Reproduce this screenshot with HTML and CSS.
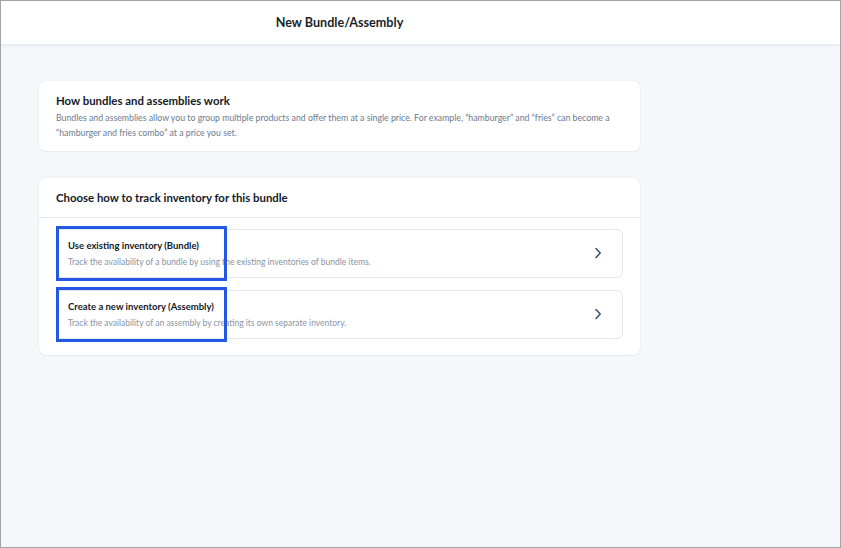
FILE: index.html
```html
<!DOCTYPE html>
<html>
<head>
<meta charset="utf-8">
<link rel="stylesheet" href="styles.css">
</head>
<body>
<div class="frame">
  <header class="topbar">
    <div class="topbar-inner">New Bundle/Assembly</div>
  </header>
  <main class="content">
    <section class="card info">
      <h2 class="card-title">How bundles and assemblies work</h2>
      <p class="card-desc">Bundles and assemblies allow you to group multiple products and offer them at a single price. For example, “hamburger” and “fries” can become a “hamburger and fries combo” at a price you set.</p>
    </section>
    <section class="card choose">
      <div class="choose-head">Choose how to track inventory for this bundle</div>
      <div class="options">
        <div class="option">
          <div class="option-text">
            <div class="option-title">Use existing inventory (Bundle)</div>
            <div class="option-desc">Track the availability of a bundle by using the existing inventories of bundle items.</div>
          </div>
          <svg class="chev" width="8" height="12" viewBox="0 0 8 12"><path d="M2 1.5 L6.2 6 L2 10.5" fill="none" stroke="#3b5478" stroke-width="1.6" stroke-linecap="round" stroke-linejoin="round"/></svg>
          <div class="highlight"></div>
        </div>
        <div class="option">
          <div class="option-text">
            <div class="option-title">Create a new inventory (Assembly)</div>
            <div class="option-desc">Track the availability of an assembly by creating its own separate inventory.</div>
          </div>
          <svg class="chev" width="8" height="12" viewBox="0 0 8 12"><path d="M2 1.5 L6.2 6 L2 10.5" fill="none" stroke="#3b5478" stroke-width="1.6" stroke-linecap="round" stroke-linejoin="round"/></svg>
          <div class="highlight"></div>
        </div>
      </div>
    </section>
  </main>
</div>
</body>
</html>
```

FILE: styles.css
```css
html, body {
  margin: 0;
  padding: 0;
}
body {
  font-family: Lato, "Noto Sans", sans-serif;
  background: #ffffff;
}
.frame {
  width: 841px;
  height: 548px;
  box-sizing: border-box;
  border: 1px solid #a2a4a7;
  background: #f4f8fb;
  overflow: hidden;
}
.topbar {
  height: 43px;
  background: #ffffff;
  box-shadow: 0 1px 3px rgba(30, 50, 80, 0.10);
  display: flex;
  align-items: center;
}
.topbar-inner {
  margin-left: 38px;
  width: 601px;
  text-align: center;
  font-weight: 700;
  font-size: 12.6px;
  color: #1a1f2b;
  padding-bottom: 1px;
}
.content {
  padding: 37px 0 0 38px;
  display: flex;
  flex-direction: column;
  gap: 27px;
}
.card {
  width: 601px;
  box-sizing: border-box;
  background: #ffffff;
  border-radius: 7px;
  box-shadow: 0 0 2px rgba(40, 70, 110, 0.10), 0 1px 2px rgba(40, 70, 110, 0.05);
}
.info {
  height: 70px;
  padding: 13px 17px 0 17px;
}
.card-title {
  margin: 0;
  font-size: 11.4px;
  line-height: 14px;
  font-weight: 700;
  color: #131a29;
}
.card-desc {
  margin: 2px 0 0 0;
  font-size: 8.75px;
  line-height: 15px;
  color: #6c7a91;
}
.choose {
  height: 177px;
}
.choose-head {
  height: 40px;
  box-sizing: border-box;
  padding: 0 17px;
  display: flex;
  align-items: center;
  font-size: 11.4px;
  font-weight: 700;
  color: #131a29;
  border-bottom: 1px solid #e2e9f2;
}
.options {
  padding: 11px 17px 0 17px;
  display: flex;
  flex-direction: column;
  gap: 12px;
}
.option {
  position: relative;
  height: 49px;
  box-sizing: border-box;
  border: 1px solid #e0e7f0;
  border-radius: 6px;
  padding: 0 20px 0 11px;
  display: flex;
  align-items: center;
}
.option-text {
  flex: 1;
  padding-top: 1px;
}
.option-title {
  font-size: 9.5px;
  line-height: 12px;
  font-weight: 700;
  color: #131a29;
}
.option-desc {
  margin-top: 5px;
  font-size: 8.5px;
  line-height: 11px;
  color: #8a94a4;
}
.chev {
  display: block;
  margin-top: -2px;
}
.highlight {
  position: absolute;
  left: -1px;
  top: -4px;
  width: 171px;
  height: 55px;
  box-sizing: border-box;
  border: 3px solid #2458e3;
  pointer-events: none;
}
```
